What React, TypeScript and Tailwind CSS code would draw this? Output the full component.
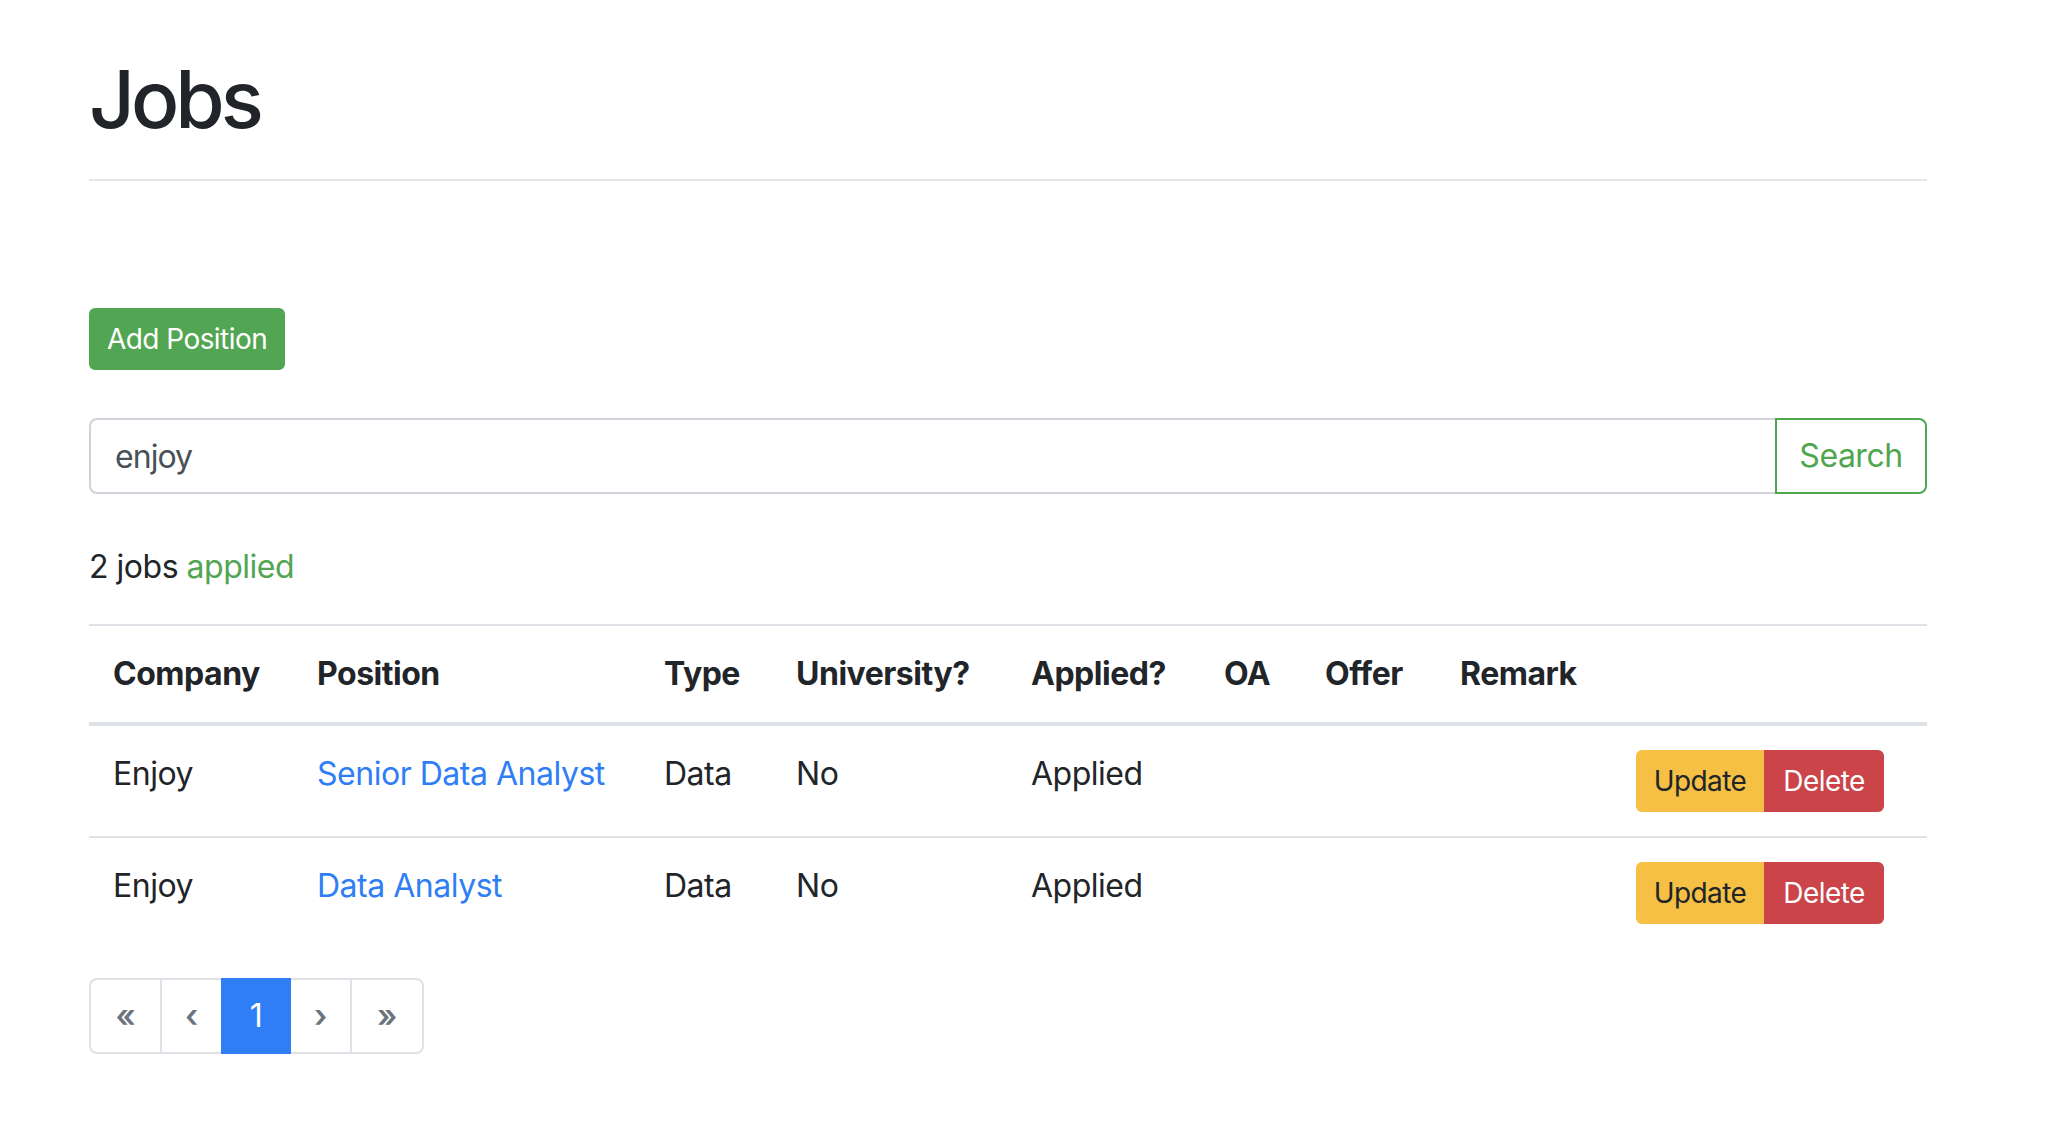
import { useState } from "react";

type Job = {
  company: string;
  position: string;
  type: string;
  university: string;
  applied: string;
  oa: string;
  offer: string;
  remark: string;
};

const jobs: Job[] = [
  { company: "Enjoy", position: "Senior Data Analyst", type: "Data", university: "No", applied: "Applied", oa: "", offer: "", remark: "" },
  { company: "Enjoy", position: "Data Analyst", type: "Data", university: "No", applied: "Applied", oa: "", offer: "", remark: "" },
];

const columns = [
  { label: "Company", w: "w-[204px]" },
  { label: "Position", w: "w-[347px]" },
  { label: "Type", w: "w-[132px]" },
  { label: "University?", w: "w-[235px]" },
  { label: "Applied?", w: "w-[193px]" },
  { label: "OA", w: "w-[101px]" },
  { label: "Offer", w: "w-[135px]" },
  { label: "Remark", w: "w-[176px]" },
  { label: "", w: "w-[315px]" },
];

function App() {
  const [query, setQuery] = useState("enjoy");

  return (
    <div className="min-h-screen bg-white font-['Inter',sans-serif] tracking-[-0.03em] text-[#212529]">
      <div className="ml-[89px] w-[1838px] pb-[60px]">
        {/* Header */}
        <h1 className="pt-[51px] text-[80px] leading-[96px] font-medium tracking-[-0.05em]">Jobs</h1>
        <hr className="mt-[32px] border-0 border-t-2 border-[#e6e6e6]" />

        <button className="mt-[127px] rounded-[6px] border-2 border-[#52a552] bg-[#52a552] px-[16px] py-[8px] text-[28px] leading-[42px] tracking-[-0.02em] text-white">
          Add Position
        </button>

        {/* Search */}
        <div className="mt-[48px] flex h-[76px]">
          <input
            value={query}
            onChange={(e) => setQuery(e.target.value)}
            className="h-full flex-1 rounded-l-[8px] border-2 border-r-0 border-[#ced4da] px-[24px] text-[32px] tracking-[-0.03em] text-[#495057] outline-none"
          />
          <button className="h-full w-[152px] rounded-r-[8px] border-2 border-[#4fa64f] text-[32px] text-[#4fa64f]">
            Search
          </button>
        </div>

        <p className="mt-[49px] text-[32px] leading-[48px]">
          2 jobs <span className="text-[#52a552]">applied</span>
        </p>

        {/* Table */}
        <table className="mt-[33px] w-full table-fixed border-collapse text-[32px] leading-[48px]">
          <thead>
            <tr className="border-t-2 border-b-4 border-[#dee2e6]">
              {columns.map((c) => (
                <th key={c.label} className={`${c.w} px-[24px] py-[24px] text-left font-bold`}>
                  {c.label}
                </th>
              ))}
            </tr>
          </thead>
          <tbody>
            {jobs.map((j, i) => (
              <tr key={i} className={i > 0 ? "border-t-2 border-[#dee2e6]" : ""}>
                <td className="px-[24px] py-[24px] align-top">{j.company}</td>
                <td className="px-[24px] py-[24px] align-top">
                  <a href="#" className="text-[#2f7ef5]">{j.position}</a>
                </td>
                <td className="px-[24px] py-[24px] align-top">{j.type}</td>
                <td className="px-[24px] py-[24px] align-top">{j.university}</td>
                <td className="px-[24px] py-[24px] align-top">{j.applied}</td>
                <td className="px-[24px] py-[24px] align-top">{j.oa}</td>
                <td className="px-[24px] py-[24px] align-top">{j.offer}</td>
                <td className="px-[24px] py-[24px] align-top">{j.remark}</td>
                <td className="px-[24px] py-[24px] align-top">
                  <div className="flex">
                    <button className="h-[62px] w-[128px] rounded-l-[6px] bg-[#f5c044] text-[28px] tracking-[-0.02em] text-[#212529]">Update</button>
                    <button className="h-[62px] w-[120px] rounded-r-[6px] bg-[#cb444a] text-[28px] tracking-[-0.02em] text-white">Delete</button>
                  </div>
                </td>
              </tr>
            ))}
          </tbody>
        </table>

        {/* Pagination */}
        <ul className="mt-[30px] flex h-[76px] text-[32px] text-[#6c757d]">
          <li className="flex w-[73px] items-center justify-center rounded-l-[8px] border-2 border-[#dee2e6] font-semibold">«</li>
          <li className="-ml-[2px] flex w-[63px] items-center justify-center border-2 border-[#dee2e6] font-semibold">‹</li>
          <li className="relative z-10 -ml-[2px] flex w-[70px] items-center justify-center border-2 border-[#2f7ef5] bg-[#2f7ef5] text-white">1</li>
          <li className="-ml-[2px] flex w-[63px] items-center justify-center border-2 border-[#dee2e6] font-semibold">›</li>
          <li className="-ml-[2px] flex w-[74px] items-center justify-center rounded-r-[8px] border-2 border-[#dee2e6] font-semibold">»</li>
        </ul>
      </div>
    </div>
  );
}

export default App;
